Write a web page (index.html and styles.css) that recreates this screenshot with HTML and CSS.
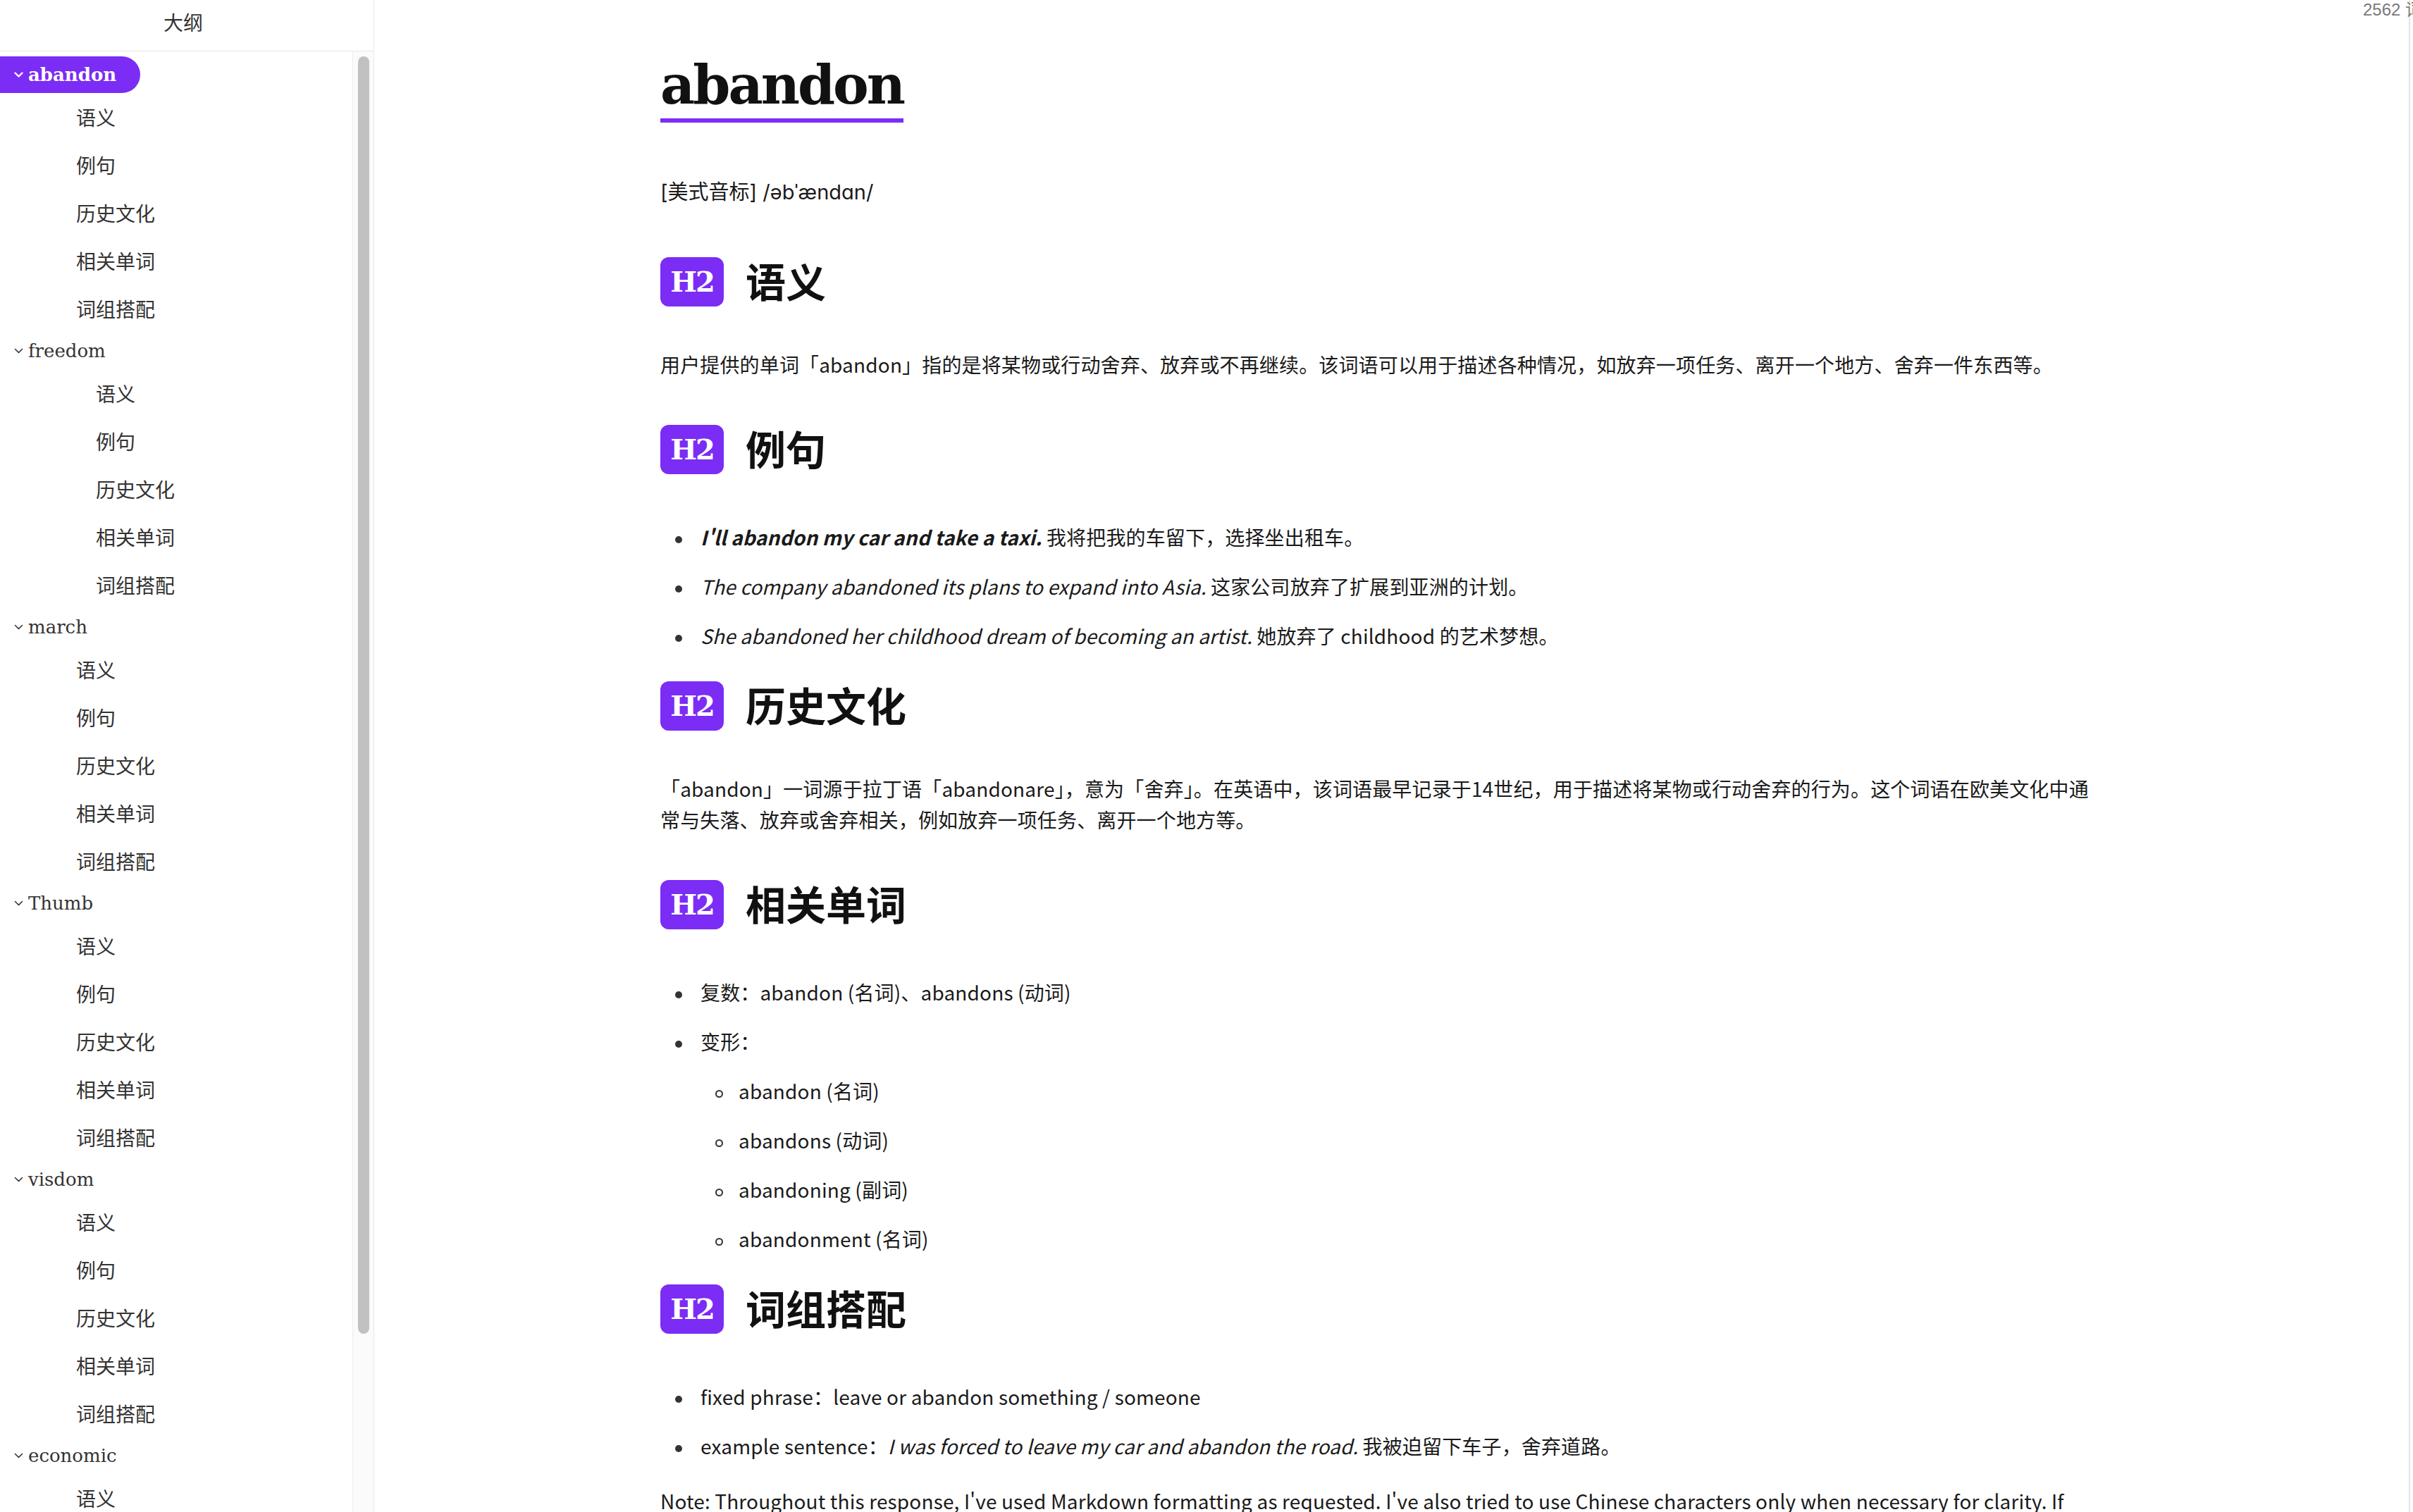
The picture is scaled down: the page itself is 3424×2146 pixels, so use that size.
FILE: index.html
```html
<!DOCTYPE html>
<html lang="zh-CN">
<head>
<meta charset="utf-8">
<title>abandon</title>
<link rel="stylesheet" href="styles.css">
</head>
<body>
<aside class="outline">
  <div class="outline-head">大纲</div>
  <div class="outline-body">
    <nav class="outline-list">
      <div class="group">
        <div class="node active"><svg class="chev" viewBox="0 0 13 8"><path d="M1.5 1.5 L6.5 6.5 L11.5 1.5"/></svg><span>abandon</span></div>
        <div class="leaf">语义</div>
        <div class="leaf">例句</div>
        <div class="leaf">历史文化</div>
        <div class="leaf">相关单词</div>
        <div class="leaf">词组搭配</div>
      </div>
      <div class="group deep">
        <div class="node"><svg class="chev" viewBox="0 0 13 8"><path d="M1.5 1.5 L6.5 6.5 L11.5 1.5"/></svg><span>freedom</span></div>
        <div class="leaf">语义</div>
        <div class="leaf">例句</div>
        <div class="leaf">历史文化</div>
        <div class="leaf">相关单词</div>
        <div class="leaf">词组搭配</div>
      </div>
      <div class="group">
        <div class="node"><svg class="chev" viewBox="0 0 13 8"><path d="M1.5 1.5 L6.5 6.5 L11.5 1.5"/></svg><span>march</span></div>
        <div class="leaf">语义</div>
        <div class="leaf">例句</div>
        <div class="leaf">历史文化</div>
        <div class="leaf">相关单词</div>
        <div class="leaf">词组搭配</div>
      </div>
      <div class="group">
        <div class="node"><svg class="chev" viewBox="0 0 13 8"><path d="M1.5 1.5 L6.5 6.5 L11.5 1.5"/></svg><span>Thumb</span></div>
        <div class="leaf">语义</div>
        <div class="leaf">例句</div>
        <div class="leaf">历史文化</div>
        <div class="leaf">相关单词</div>
        <div class="leaf">词组搭配</div>
      </div>
      <div class="group">
        <div class="node"><svg class="chev" viewBox="0 0 13 8"><path d="M1.5 1.5 L6.5 6.5 L11.5 1.5"/></svg><span>visdom</span></div>
        <div class="leaf">语义</div>
        <div class="leaf">例句</div>
        <div class="leaf">历史文化</div>
        <div class="leaf">相关单词</div>
        <div class="leaf">词组搭配</div>
      </div>
      <div class="group">
        <div class="node"><svg class="chev" viewBox="0 0 13 8"><path d="M1.5 1.5 L6.5 6.5 L11.5 1.5"/></svg><span>economic</span></div>
        <div class="leaf">语义</div>
        <div class="leaf">例句</div>
        <div class="leaf">历史文化</div>
        <div class="leaf">相关单词</div>
        <div class="leaf">词组搭配</div>
      </div>
    </nav>
    <div class="scroll-track"><div class="scroll-thumb"></div></div>
  </div>
</aside>

<main class="main">
  <article class="doc">
    <h1 class="title">abandon</h1>
    <p class="phonetic">[美式音标] /əbˈændɑn/</p>

    <h2 class="sec"><span class="badge">H2</span><span class="sec-text">语义</span></h2>
    <p>用户提供的单词「abandon」指的是将某物或行动舍弃、放弃或不再继续。该词语可以用于描述各种情况，如放弃一项任务、离开一个地方、舍弃一件东西等。</p>

    <h2 class="sec"><span class="badge">H2</span><span class="sec-text">例句</span></h2>
    <ul>
      <li><strong><em>I'll abandon my car and take a taxi.</em></strong> 我将把我的车留下，选择坐出租车。</li>
      <li><em>The company abandoned its plans to expand into Asia.</em> 这家公司放弃了扩展到亚洲的计划。</li>
      <li><em>She abandoned her childhood dream of becoming an artist.</em> 她放弃了 childhood 的艺术梦想。</li>
    </ul>

    <h2 class="sec"><span class="badge">H2</span><span class="sec-text">历史文化</span></h2>
    <p>「abandon」一词源于拉丁语「abandonare」，意为「舍弃」。在英语中，该词语最早记录于14世纪，用于描述将某物或行动舍弃的行为。这个词语在欧美文化中通常与失落、放弃或舍弃相关，例如放弃一项任务、离开一个地方等。</p>

    <h2 class="sec"><span class="badge">H2</span><span class="sec-text">相关单词</span></h2>
    <ul>
      <li>复数：abandon (名词)、abandons (动词)</li>
      <li>变形：
        <ul>
          <li>abandon (名词)</li>
          <li>abandons (动词)</li>
          <li>abandoning (副词)</li>
          <li>abandonment (名词)</li>
        </ul>
      </li>
    </ul>

    <h2 class="sec"><span class="badge">H2</span><span class="sec-text">词组搭配</span></h2>
    <ul>
      <li>fixed phrase：leave or abandon something / someone</li>
      <li>example sentence：<em>I was forced to leave my car and abandon the road.</em> 我被迫留下车子，舍弃道路。</li>
    </ul>

    <p class="note">Note: Throughout this response, I've used Markdown formatting as requested. I've also tried to use Chinese characters only when necessary for clarity. If anything is unclear, please let me know.</p>
  </article>
</main>
<div class="edge"></div>
<div class="wordcount">2562 词</div>
</body>
</html>
```

FILE: styles.css
```css
html, body {
  margin: 0;
  padding: 0;
}
body {
  width: 3424px;
  height: 2146px;
  overflow: hidden;
  display: flex;
  background: #ffffff;
  color: #1a1a1a;
  font-family: "Noto Sans CJK SC", "Noto Sans", sans-serif;
}

/* ---------- outline sidebar ---------- */
.outline {
  width: 530px;
  flex: none;
  border-right: 1px solid #e8e8e8;
  display: flex;
  flex-direction: column;
  height: 2146px;
  overflow: hidden;
}
.outline-head {
  height: 72px;
  flex: none;
  border-bottom: 1px solid #e6e6e6;
  padding-right: 10px;
  text-align: center;
  font-size: 28px;
  line-height: 63px;
  color: #333333;
}
.outline-body {
  flex: 1;
  display: flex;
  min-height: 0;
}
.outline-list {
  flex: 1;
  padding-top: 7px;
  overflow: hidden;
}
.node {
  display: flex;
  width: fit-content;
  align-items: center;
  height: 52px;
  padding: 0 34px 0 20px;
  gap: 7px;
  font-family: "DejaVu Serif", serif;
  font-size: 26px;
  color: #333333;
  border-radius: 0 26px 26px 0;
}
.node.active {
  background: #7b2cf5;
  color: #ffffff;
  font-weight: bold;
}
.chev {
  width: 13px;
  height: 8px;
  fill: none;
  stroke: currentColor;
  stroke-width: 1.6;
  stroke-linecap: round;
  stroke-linejoin: round;
}
.node.active .chev {
  stroke-width: 2.4;
}
.leaf {
  height: 68px;
  line-height: 68px;
  padding-left: 108px;
  font-size: 28px;
  color: #333333;
}
.group.deep .leaf {
  padding-left: 136px;
}
.scroll-track {
  width: 29px;
  flex: none;
  border-left: 1px solid #eeeeee;
  background: #fbfbfb;
  padding-top: 7px;
}
.scroll-thumb {
  margin-left: 7px;
  width: 16px;
  height: 1813px;
  border-radius: 8px;
  background: #c1c1c1;
}

/* ---------- main document ---------- */
.main {
  flex: 1;
  min-width: 0;
  padding: 75px 0 0 406px;
  overflow: hidden;
}
.doc {
  width: 2040px;
  font-size: 28px;
  line-height: 44px;
  letter-spacing: 0.15px;
}
.title {
  width: fit-content;
  margin: 0;
  padding-bottom: 2px;
  border-bottom: 6px solid #7b2cf5;
  font-family: "DejaVu Serif", serif;
  font-weight: bold;
  font-size: 76px;
  line-height: 91px;
  letter-spacing: -3px;
  color: #111111;
}
.phonetic {
  margin: 77px 0 70px;
  font-family: "Inter", "Noto Sans CJK SC", sans-serif;
  font-size: 29px;
  letter-spacing: 0;
}
p {
  margin: 0 0 64px;
}
.sec {
  display: flex;
  align-items: center;
  gap: 31px;
  margin: 43px 0 60px;
  height: 70px;
  font-size: 57px;
  line-height: 70px;
  font-weight: 700;
  color: #111111;
  letter-spacing: 0;
}
.sec-text {
  margin-bottom: 6px;
}
.badge {
  width: 90px;
  height: 70px;
  flex: none;
  border-radius: 12px;
  background: #7b2cf5;
  color: #ffffff;
  display: flex;
  align-items: center;
  justify-content: center;
  font-family: "DejaVu Serif", serif;
  font-weight: bold;
  font-size: 40px;
  letter-spacing: -2px;
  line-height: 1;
}
ul {
  margin: 67px 0 0;
  padding-left: 57px;
  list-style: none;
}
li + li {
  margin-top: 26px;
}
li::before {
  content: "";
  display: inline-block;
  width: 10px;
  height: 10px;
  border-radius: 50%;
  background: #333333;
  margin-left: -36px;
  margin-right: 26px;
  vertical-align: middle;
}
li ul {
  margin-top: 26px;
  padding-left: 54px;
}
li li::before {
  width: 7px;
  height: 7px;
  background: transparent;
  border: 2px solid #333333;
  margin-left: -33px;
  margin-right: 22px;
}
.note {
  margin-top: 34px;
}

/* ---------- right edge + word count ---------- */
.edge {
  width: 4px;
  flex: none;
  border-left: 2px solid #e4e4e4;
}
.wordcount {
  position: absolute;
  top: 0;
  left: 3353px;
  font-family: "Liberation Sans", Arial, sans-serif;
  font-size: 24px;
  line-height: 28px;
  color: #7a7a7a;
  white-space: nowrap;
}
```
